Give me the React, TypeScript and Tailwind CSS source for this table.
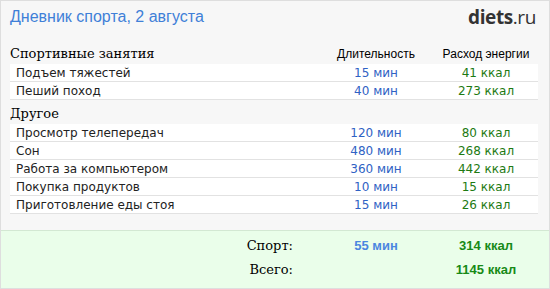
import React from "react";

type Item = { name: string; min: number; kcal: number };

const sport: Item[] = [
  { name: "Подъем тяжестей", min: 15, kcal: 41 },
  { name: "Пеший поход", min: 40, kcal: 273 },
];

const other: Item[] = [
  { name: "Просмотр телепередач", min: 120, kcal: 80 },
  { name: "Сон", min: 480, kcal: 268 },
  { name: "Работа за компьютером", min: 360, kcal: 442 },
  { name: "Покупка продуктов", min: 10, kcal: 15 },
  { name: "Приготовление еды стоя", min: 15, kcal: 26 },
];

const serif = "font-['DejaVu_Serif',serif]";
const sans = "font-['DejaVu_Sans',sans-serif]";

function Row({ item }: { item: Item }) {
  return (
    <div className={`grid grid-cols-[1fr_116px_104px] h-[18px] items-center bg-white border-b border-[#e2e2e2] text-[12px] ${sans}`}>
      <span className="pl-[6px] text-[#222]">{item.name}</span>
      <span className="text-center text-[#2f62c4]">{item.min} мин</span>
      <span className="text-center text-[#1d7a12]">{item.kcal} ккал</span>
    </div>
  );
}

export default function App() {
  return (
    <div className="w-[550px] h-[289px] border border-[#dedede] bg-[#f7f7f7] flex flex-col">
      {/* title + logo */}
      <div className="flex justify-between items-center h-[32px] pl-[9px] pr-[13px]">
        <span className="text-[16px] text-[#3f80d8] font-['Liberation_Sans',sans-serif]">
          Дневник спорта, 2 августа
        </span>
        <span className="text-[19px] text-[#333] font-['Open_Sans',sans-serif] tracking-[-0.4px]">
          <b>diets</b>.ru
        </span>
      </div>

      <div className="mt-[11px] ml-[9px] mr-[11px]">
        <div className="grid grid-cols-[1fr_116px_104px] h-[20px] items-center">
          <span className={`text-[13px] text-black ${serif}`}>Спортивные занятия</span>
          <span className="text-center text-[12px] text-black font-['Liberation_Sans',sans-serif]">Длительность</span>
          <span className="text-center text-[12px] text-black font-['Liberation_Sans',sans-serif]">Расход энергии</span>
        </div>
        {sport.map((it) => (
          <Row key={it.name} item={it} />
        ))}
        <div className={`h-[24px] flex items-end pb-[1px] text-[13px] text-black ${serif}`}>Другое</div>
        {other.map((it) => (
          <Row key={it.name} item={it} />
        ))}
      </div>

      {/* totals */}
      <div className="mt-auto h-[58px] bg-[#eafeea] border-t border-[#d3e8d3] pt-[3px] px-[9px] pr-[11px]">
        {[
          { label: "Спорт:", min: "55 мин", kcal: "314 ккал" },
          { label: "Всего:", min: "", kcal: "1145 ккал" },
        ].map((r) => (
          <div key={r.label} className="grid grid-cols-[1fr_116px_104px] h-[24px] items-center">
            <span className={`text-right pr-[25px] text-[13px] text-black ${serif}`}>{r.label}</span>
            <span className="text-center text-[13px] font-bold text-[#4a86e0] font-['Liberation_Sans',sans-serif]">{r.min}</span>
            <span className="text-center text-[13px] font-bold text-[#178a17] font-['Liberation_Sans',sans-serif]">{r.kcal}</span>
          </div>
        ))}
      </div>
    </div>
  );
}
